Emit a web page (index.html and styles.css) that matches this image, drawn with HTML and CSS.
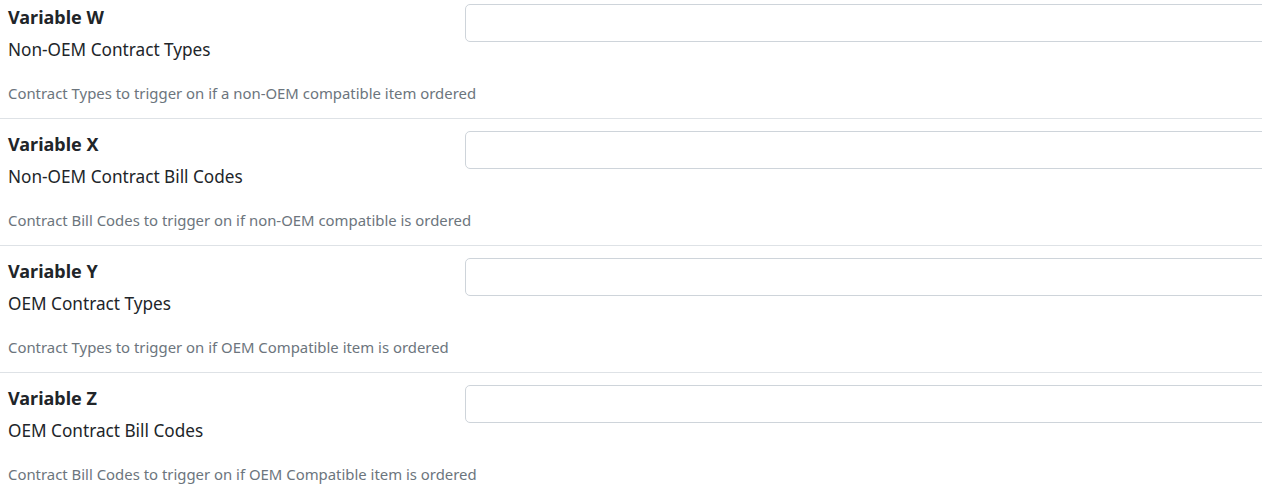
FILE: index.html
```html
<!DOCTYPE html>
<html lang="en">
  <head>
    <meta charset="UTF-8" />
    <meta name="viewport" content="width=device-width, initial-scale=1.0" />
    <title>Variables</title>
    <link rel="stylesheet" href="styles.css">
  </head>
  <body>
    <main class="settings">
      <div class="setting-row">
        <div class="setting-info">
          <h5>Variable W</h5>
          <p class="setting-name">Non-OEM Contract Types</p>
          <p class="setting-help">Contract Types to trigger on if a non-OEM compatible item ordered</p>
        </div>
        <div class="setting-field">
          <input type="text" />
        </div>
      </div>
      <div class="setting-row">
        <div class="setting-info">
          <h5>Variable X</h5>
          <p class="setting-name">Non-OEM Contract Bill Codes</p>
          <p class="setting-help">Contract Bill Codes to trigger on if non-OEM compatible is ordered</p>
        </div>
        <div class="setting-field">
          <input type="text" />
        </div>
      </div>
      <div class="setting-row">
        <div class="setting-info">
          <h5>Variable Y</h5>
          <p class="setting-name">OEM Contract Types</p>
          <p class="setting-help">Contract Types to trigger on if OEM Compatible item is ordered</p>
        </div>
        <div class="setting-field">
          <input type="text" />
        </div>
      </div>
      <div class="setting-row">
        <div class="setting-info">
          <h5>Variable Z</h5>
          <p class="setting-name">OEM Contract Bill Codes</p>
          <p class="setting-help">Contract Bill Codes to trigger on if OEM Compatible item is ordered</p>
        </div>
        <div class="setting-field">
          <input type="text" />
        </div>
      </div>
    </main>
  </body>
</html>
```

FILE: styles.css
```css
* {
  margin: 0;
  padding: 0;
  box-sizing: border-box;
}

body {
  font-family: "Noto Sans", "Open Sans", sans-serif;
  background-color: #fff;
  color: #212529;
  overflow: hidden;
}

.settings {
  margin-top: -8px;
}

.setting-row {
  display: grid;
  grid-template-columns: 457px 830px;
  padding: 12px 0 14px 8px;
  border-bottom: 1px solid #dee2e6;
}

.setting-info h5 {
  font-size: 18px;
  font-weight: 700;
  line-height: 26px;
}

.setting-name {
  font-size: 17.2px;
  line-height: 24px;
  margin-top: 8px;
}

.setting-help {
  font-size: 14.9px;
  line-height: 21px;
  margin-top: 21px;
  color: #6c757d;
  white-space: nowrap;
}

.setting-field input {
  display: block;
  width: 100%;
  height: 38px;
  border: 1px solid #ced4da;
  border-radius: 5px;
  padding: 6px 12px;
  font-size: 16px;
}
```
